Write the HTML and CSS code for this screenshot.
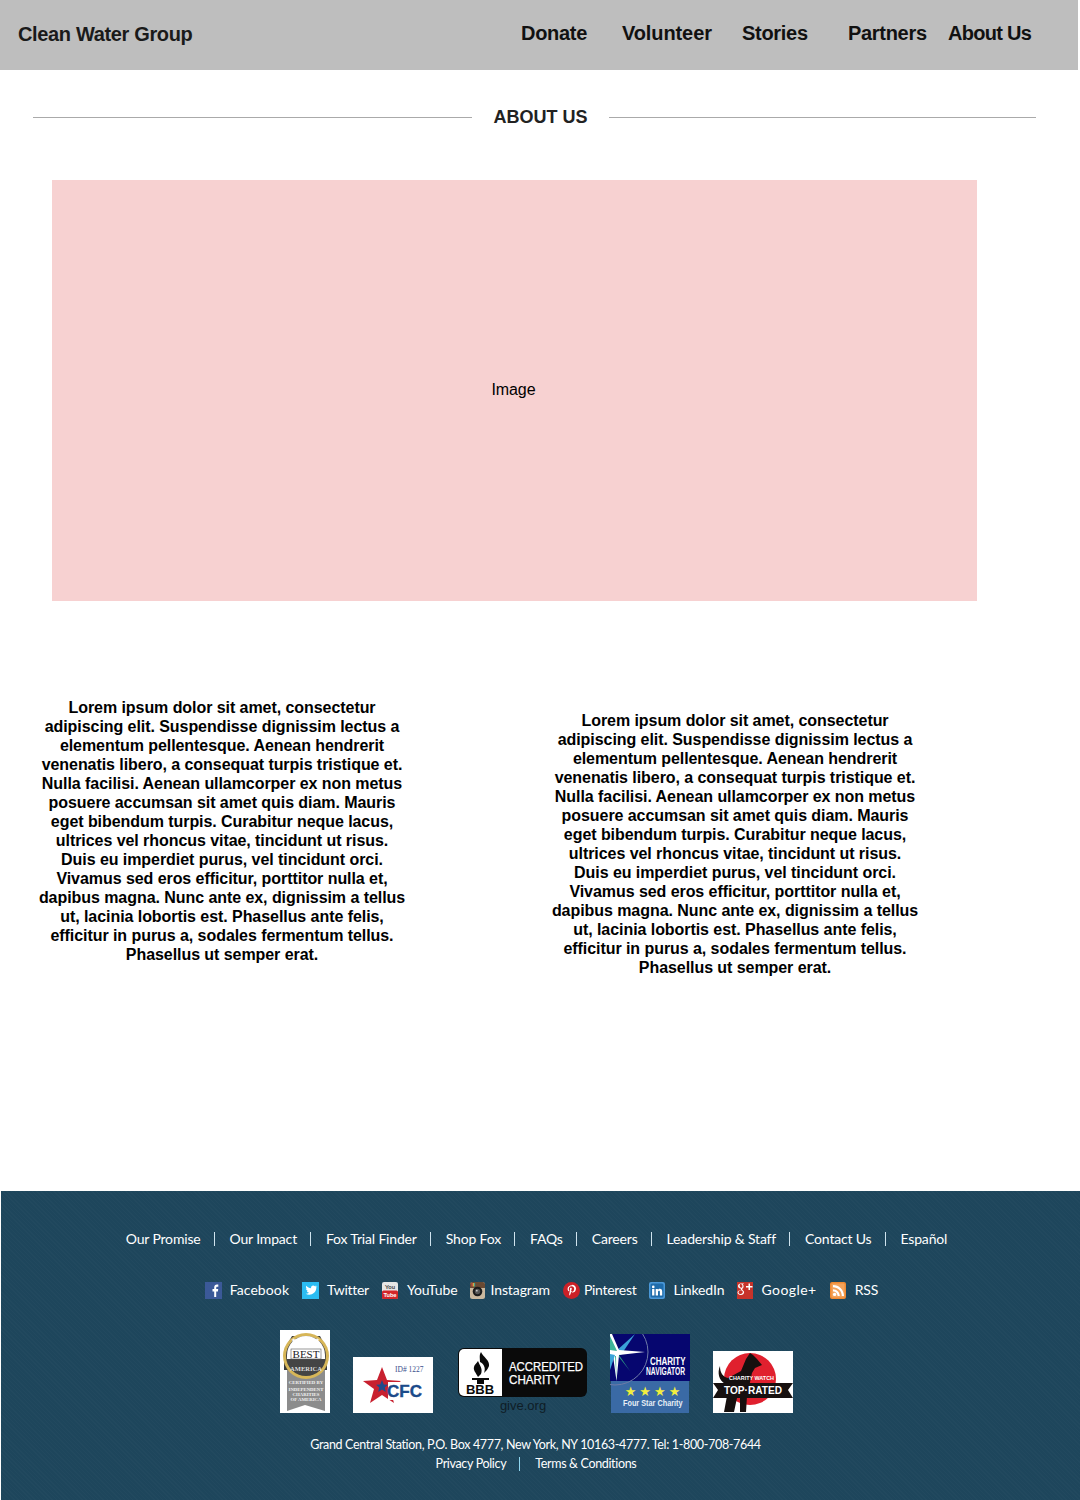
FILE: index.html
```html
<!DOCTYPE html>
<html lang="en">
<head>
    <meta charset="UTF-8">
    <title>Clean Water Group</title>
    <link rel="stylesheet" href="styles.css">
</head>
<body>
    <header class="top-bar">
        <div class="brand">Clean Water Group</div>
        <nav class="top-nav">
            <a>Donate</a>
            <a class="loose-link">Volunteer</a>
            <a>Stories</a>
            <a>Partners</a>
            <a class="last-link">About Us</a>
        </nav>
    </header>

    <div class="section-title">
        <span class="rule rule-left"></span>
        <h2>ABOUT US</h2>
        <span class="rule rule-right"></span>
    </div>

    <div class="image-box">Image</div>

    <div class="columns">
        <p class="col-one">Lorem ipsum dolor sit amet, consectetur adipiscing elit. Suspendisse dignissim lectus a elementum pellentesque. Aenean hendrerit venenatis libero, a consequat turpis tristique et. Nulla facilisi. Aenean ullamcorper ex non metus posuere accumsan sit amet quis diam. Mauris eget bibendum turpis. Curabitur neque lacus, ultrices vel rhoncus vitae, tincidunt ut risus. Duis eu imperdiet purus, vel tincidunt orci. Vivamus sed eros efficitur, porttitor nulla et, dapibus magna. Nunc ante ex, dignissim a tellus ut, lacinia lobortis est. Phasellus ante felis, efficitur in purus a, sodales fermentum tellus. Phasellus ut semper erat.</p>
        <p class="col-two">Lorem ipsum dolor sit amet, consectetur adipiscing elit. Suspendisse dignissim lectus a elementum pellentesque. Aenean hendrerit venenatis libero, a consequat turpis tristique et. Nulla facilisi. Aenean ullamcorper ex non metus posuere accumsan sit amet quis diam. Mauris eget bibendum turpis. Curabitur neque lacus, ultrices vel rhoncus vitae, tincidunt ut risus. Duis eu imperdiet purus, vel tincidunt orci. Vivamus sed eros efficitur, porttitor nulla et, dapibus magna. Nunc ante ex, dignissim a tellus ut, lacinia lobortis est. Phasellus ante felis, efficitur in purus a, sodales fermentum tellus. Phasellus ut semper erat.</p>
    </div>

    <footer class="site-footer">
        <ul class="foot-links">
            <li>Our Promise</li>
            <li>Our Impact</li>
            <li>Fox Trial Finder</li>
            <li>Shop Fox</li>
            <li>FAQs</li>
            <li>Careers</li>
            <li>Leadership &amp; Staff</li>
            <li>Contact Us</li>
            <li>Español</li>
        </ul>

        <ul class="social">
            <li class="text-loose">
                <svg class="icon" viewBox="0 0 17 17"><rect width="17" height="17" fill="#3b5998"/><path d="M9.2 15V9.4H7.5V7.1h1.7V5.5c0-1.9 1.1-2.9 2.8-2.9h1.3v2.2h-1c-.8 0-1.1.4-1.1 1.1v1.2h2l-.3 2.3h-1.7V15z" fill="#fff"/></svg>
                Facebook
            </li>
            <li class="text-tight">
                <svg class="icon" viewBox="0 0 17 17"><rect width="17" height="17" fill="#2bbcf2"/><path d="M14.6 4.5c-.4.2-.9.3-1.3.4.5-.3.8-.7 1-1.3-.4.3-.9.4-1.4.6-.9-1-2.6-1-3.4.1-.5.6-.6 1.3-.4 2-1.9-.1-3.6-1-4.8-2.5-.6 1.1-.3 2.4.7 3.1-.4 0-.7-.1-1-.3 0 1.2.8 2.2 1.9 2.4-.3.1-.7.1-1 0 .3 1 1.2 1.7 2.2 1.7-1 .8-2.2 1.1-3.5 1 3.7 2.3 10.8.8 10.8-6.6.4-.1.9-.4 1.2-.6z" fill="#fff"/></svg>
                Twitter
            </li>
            <li class="gap-nine">
                <svg class="icon icon-small" viewBox="0 0 16 17"><rect width="16" height="17" rx="2" fill="#e6e6e6"/><rect y="8.5" width="16" height="8.5" rx="1.5" fill="#d3262a"/><text x="8" y="7" class="yt-you">You</text><text x="8" y="14.6" class="yt-tube">Tube</text></svg>
                YouTube
            </li>
            <li class="gap-five">
                <svg class="icon icon-narrow" viewBox="0 0 15 17"><rect width="15" height="17" rx="2.5" fill="#cbb99f"/><path d="M0 6V2.5A2.5 2.5 0 0 1 2.5 0h10A2.5 2.5 0 0 1 15 2.5V6z" fill="#6a4a33"/><rect x="1.5" y="1" width="1" height="3.5" fill="#d44"/><rect x="2.8" y="1" width="1" height="3.5" fill="#e8c84a"/><rect x="4.1" y="1" width="1" height="3.5" fill="#4a9"/><circle cx="7.5" cy="9.5" r="4.8" fill="#1c1c1c"/><circle cx="7.5" cy="9.5" r="2.7" fill="#555"/><circle cx="6.8" cy="8.7" r=".9" fill="#ccc"/></svg>
                Instagram
            </li>
            <li class="gap-four text-tight">
                <svg class="icon" viewBox="0 0 17 17"><circle cx="8.5" cy="8.5" r="8.5" fill="#cb2027"/><path d="M8.9 3.2c-2.8 0-4.3 1.8-4.3 3.7 0 .9.5 2 1.3 2.4.2.1.3 0 .3-.1l.2-.7c0-.1 0-.2-.1-.3-.3-.3-.5-.8-.5-1.3 0-1.3 1-2.6 2.8-2.6 1.5 0 2.6 1 2.6 2.5 0 1.7-.8 2.9-2 2.9-.6 0-1.1-.5-1-1.1.2-.8.6-1.6.6-2.1 0-1.3-1.9-1.1-1.9.6 0 .5.2.9.2.9l-.8 3.2c-.2.8 0 2.2 0 2.3 0 .1.1.1.2 0 .1-.1 1-1.3 1.2-2.1l.4-1.6c.2.4.9.8 1.5.8 2 0 3.4-1.8 3.4-4.1 0-2.2-1.8-3.8-4.1-3.8z" fill="#fff"/></svg>
                Pinterest
            </li>
            <li>
                <svg class="icon icon-small" viewBox="0 0 16 17"><rect width="16" height="17" rx="2" fill="#4a98d8"/><rect x="1.5" y="1.5" width="13" height="14" rx="1.5" fill="#1f6cab"/><rect x="3.1" y="7" width="2.3" height="6.5" fill="#fff"/><circle cx="4.25" cy="4.9" r="1.3" fill="#fff"/><path d="M6.7 7h2.2v.9c.4-.6 1.1-1.1 2-1.1 1.700 0 2.300 1.100 2.300 2.800v3.900h-2.300v-3.500c0-.8-.2-1.300-.9-1.300-.8 0-1 .6-1 1.300v3.500H6.700z" fill="#fff"/></svg>
                LinkedIn
            </li>
            <li class="text-wide">
                <svg class="icon icon-small" viewBox="0 0 16 17"><rect width="16" height="17" fill="#c7332a"/><path d="M7 1.4H3.900C2.200 1.400 1 2.600 1 4c0 1.500 1.100 2.500 2.600 2.500h.3c-.1.200-.1.400-.1.600 0 .3.100.6.300.8C2.200 8 .5 8.900.5 10.600c0 1.500 1.600 2.500 3.300 2.500 2 0 3.300-1.300 3.300-2.800 0-1.800-2-2.200-2-3 0-.7 1.500-1 1.500-3 0-1.100-.6-1.700-1-2l1-.2z M3.800 2c1 0 1.600 1 1.600 2.200 0 .9-.5 1.600-1.200 1.600-1 0-1.600-1.100-1.600-2.200C2.600 2.700 3 2 3.800 2z M4 8.200c1.100.4 1.800 1 1.800 1.900 0 1-.8 1.900-2.100 1.900-1.400 0-2.200-.8-2.200-1.800 0-1.200 1.500-2 2.500-2z" fill="#fff"/><path d="M11.500 1.500v2.500H9v1.500h2.500V8H13V5.500h2.500V4H13V1.500z" fill="#fff"/></svg>
                Google+
            </li>
            <li class="gap-nine">
                <svg class="icon icon-small" viewBox="0 0 16 17"><rect width="16" height="17" rx="2" fill="#f08a32"/><rect x="1.5" y="1.5" width="13" height="14" rx="1" fill="#f3a35c"/><circle cx="4.6" cy="12.4" r="1.7" fill="#fff"/><path d="M3 7.2v2.200c2.500 0 4.600 2.100 4.600 4.600h2.200C9.800 10.200 6.800 7.200 3 7.200z M3 3v2.200c4.900 0 8.800 3.900 8.800 8.800H14C14 7.900 9.100 3 3 3z" fill="#fff"/></svg>
                RSS
            </li>
        </ul>

        <div class="badges">
            <svg class="badge" width="50" height="83" viewBox="0 0 50 83">
                <rect width="50" height="83" fill="#fff"/>
                <path d="M7 34 V81 L25 75 L45 81 V34 Z" fill="#8c8c8c"/>
                <path d="M4 20 L12 6 H40 L47 20 V40 H4 Z" fill="#3a3a3a"/>
                <circle cx="26" cy="26" r="23" fill="#d7b658"/>
                <circle cx="26" cy="26" r="20" fill="#444"/>
                <path d="M7 25 A19 19 0 0 1 45 25 V29 H7 Z" fill="#fff"/>
                <rect x="11" y="19" width="30" height="10" fill="#fff" stroke="#555" stroke-width=".6"/>
                <text x="26" y="12" class="best-stars">★★★★★</text>
                <text x="26" y="28" class="best-big">BEST</text>
                <text x="26" y="41" class="best-arc">AMERICA</text>
                <text x="26" y="54" class="best-small">CERTIFIED BY</text>
                <text x="26" y="61" class="best-small">INDEPENDENT</text>
                <text x="26" y="66" class="best-small">CHARITIES</text>
                <text x="26" y="71" class="best-small">OF AMERICA</text>
            </svg>
            <svg class="badge badge-wide-gap" width="80" height="56" viewBox="0 0 80 56">
                <rect width="80" height="56" fill="#fff"/>
                <text x="42" y="15" class="cfc-id">ID# 1227</text>
                <path d="M29 10 L34 23 L48 24 L37 32 L41 46 L29 38 L17 46 L21 32 L10 24 L24 23 Z" fill="#c8202f"/>
                <rect x="35" y="25" width="36" height="18" fill="#fff"/>
                <path d="M29 23 L30.8 27.5 L35 27.8 L31.8 30.5 L32.8 35 L29 32.5 L25.2 35 L26.2 30.5 L23 27.8 L27.2 27.5 Z" fill="#1f4a8c"/>
                <text x="34" y="40" class="cfc-name">CFC</text>
            </svg>
            <svg class="badge badge-narrow-gap" width="130" height="65" viewBox="0 0 130 65">
                <rect width="129" height="49" rx="6" fill="#0a0a0a"/>
                <path d="M1 6 a5 5 0 0 1 5-5 H44 V48 H6 a5 5 0 0 1-5-5 Z" fill="#fff"/>
                <path d="M23 4 C25 9 32 12 31 18 C30 21 28 23 26 25 C28 20 26 16 22 14 C22 10 21 7 23 4 Z" fill="#0a0a0a"/>
                <path d="M20 13 C22 18 25 21 23 26 L20 29 C18 25 15 22 16 19 C16 17 19 15 20 13 Z" fill="#0a0a0a"/>
                <path d="M14 30 H31 V32 H26 V36 H19 V32 H14 Z" fill="#0a0a0a"/>
                <text x="22" y="46" class="bbb-mark">BBB</text>
                <text x="51" y="23" class="bbb-line" textLength="74" lengthAdjust="spacingAndGlyphs">ACCREDITED</text>
                <text x="51" y="36" class="bbb-line" textLength="51" lengthAdjust="spacingAndGlyphs">CHARITY</text>
                <text x="65" y="62" class="bbb-give">give.org</text>
            </svg>
            <svg class="badge" width="80" height="79" viewBox="0 0 80 79">
                <rect width="80" height="47" fill="#06066f"/>
                <rect x="1" y="47" width="78" height="32" fill="#3a6aa5"/>
                <circle cx="5" cy="18" r="33" fill="none" stroke="#6f7ba8" stroke-width="1"/>
                <path d="M5 18 L25 0 L11 21 Z" fill="#3aa3d8"/>
                <path d="M5 18 L20 37 L9 21 Z" fill="#2e9d83"/>
                <path d="M2 0 L9 16 L35 18 L9 21 L6.5 47 L3 22 L0 22 V0 Z" fill="#fff"/>
                <path d="M0 2 L7 17 L0 16 Z" fill="#3fb39a"/>
                <path d="M0 36 L5 21 L0 20 Z" fill="#3aa3d8"/>
                <path d="M6 22 L6.5 47 L5 22 Z" fill="#3fb39a"/>
                <text class="nav-name" transform="translate(40 31) scale(.8 1)">CHARITY</text>
                <text class="nav-name" transform="translate(36 41) scale(.67 1)">NAVIGATOR</text>
                <text x="44" y="62" class="nav-stars">★★★★</text>
                <text class="nav-four" transform="translate(13 72) scale(.86 1)">Four Star Charity</text>
            </svg>
            <svg class="badge" width="80" height="62" viewBox="0 0 80 62">
                <rect width="80" height="62" fill="#fff"/>
                <circle cx="37" cy="28" r="26" fill="#e0202e"/>
                <path d="M7 15 C4 22 6 29 12 33 L14 45 L11 61 H21 L24 47 H27 V61 H33 L34 45 L39 22 L42 17 L49 14 L44 8 L40 4 L37 2 L33 8 L28 20 L15 27 C10 26 7 22 7 15 Z" fill="#16100f"/>
                <path d="M0 32 H80 L75 39 L80 47 H0 L5 39 Z" fill="#16100f"/>
                <text x="16" y="29" class="cw-small" textLength="45" lengthAdjust="spacingAndGlyphs">CHARITY WATCH</text>
                <text x="11" y="43" class="cw-big" textLength="58" lengthAdjust="spacingAndGlyphs">TOP·RATED</text>
            </svg>
        </div>

        <p class="address">Grand Central Station, P.O. Box 4777, New York, NY 10163-4777. Tel: 1-800-708-7644</p>
        <ul class="legal">
            <li>Privacy Policy</li>
            <li>Terms &amp; Conditions</li>
        </ul>
    </footer>
</body>
</html>
```

FILE: styles.css
```css
* {
    margin: 0;
    padding: 0;
    box-sizing: border-box;
}
body {
    width: 1080px;
    height: 1500px;
    overflow: hidden;
    background: #fff;
    font-family: "Liberation Sans", Arial, sans-serif;
    color: #000;
}
ul {
    list-style: none;
}

.top-bar {
    display: flex;
    justify-content: space-between;
    align-items: center;
    width: 1078px;
    height: 70px;
    background: #bebebe;
}
.brand {
    margin-left: 18px;
    margin-top: -2px;
    font-size: 20px;
    font-weight: bold;
    letter-spacing: -0.35px;
    color: #1a1a1a;
}
.top-nav {
    display: grid;
    grid-template-columns: 101px 120px 106px 100px 130px;
    margin-top: -3px;
    font-size: 20px;
    font-weight: bold;
    letter-spacing: -0.3px;
    color: #111;
}
.loose-link {
    letter-spacing: -0.1px;
}
.last-link {
    letter-spacing: -0.7px;
}

.section-title {
    display: flex;
    align-items: center;
    margin-top: 36px;
    height: 23px;
}
.section-title h2 {
    width: 137px;
    text-align: center;
    font-size: 18px;
    font-weight: bold;
    color: #222;
}
.rule {
    height: 1px;
    background: #aaa;
}
.rule-left {
    width: 439px;
    margin-left: 33px;
}
.rule-right {
    width: 427px;
}

.image-box {
    display: flex;
    align-items: center;
    justify-content: center;
    width: 925px;
    height: 421px;
    margin: 51px 0 0 52px;
    padding: 0 2px 2px 0;
    background: #f7d1d1;
    font-size: 16px;
    letter-spacing: -0.1px;
}

.columns {
    display: grid;
    grid-template-columns: 370px 370px;
    column-gap: 143px;
    height: 590px;
    padding: 97px 0 0 37px;
}
.columns p {
    text-align: center;
    font-size: 16px;
    line-height: 19px;
    font-weight: bold;
    letter-spacing: -0.06px;
}
.col-two {
    margin-top: 13px;
}

.site-footer {
    height: 309px;
    margin-left: 1px;
    padding-top: 39px;
    background-color: #1e465c;
    background-image: repeating-linear-gradient(45deg, rgba(255,255,255,.015) 0 1px, transparent 1px 3px);
    font-family: Lato, "Liberation Sans", sans-serif;
    font-size: 14px;
    letter-spacing: -0.17px;
    color: #fff;
}
.foot-links,
.social,
.legal {
    display: flex;
    justify-content: center;
    line-height: 18px;
}
.foot-links li + li,
.legal li + li {
    margin-left: 13px;
    padding-left: 16px;
    background: linear-gradient(#cfe3ee, #cfe3ee) no-repeat 0 center / 1px 14px;
}
.foot-links {
    padding-right: 8px;
}

.social {
    margin-top: 33px;
    padding-left: 2px;
    letter-spacing: -0.1px;
}
.social li {
    display: flex;
    align-items: center;
    gap: 8px;
    margin-right: 13px;
}
.social li:last-child {
    margin-right: 0;
}
.social .gap-five {
    gap: 5px;
}
.social .gap-four {
    gap: 4px;
}
.social .gap-nine {
    gap: 9px;
}
.social .text-tight {
    letter-spacing: -0.3px;
}
.social .text-loose {
    letter-spacing: 0.1px;
}
.social .text-wide {
    letter-spacing: 0.45px;
}
.icon {
    display: block;
    width: 17px;
    height: 17px;
}
.icon-small {
    width: 16px;
}
.icon-narrow {
    width: 15px;
}

.badges {
    display: flex;
    align-items: flex-end;
    margin: 31px 0 0 279px;
}
.badge {
    display: block;
    margin-right: 23px;
    flex: none;
}
.badge-wide-gap {
    margin-right: 25px;
}
.badge-narrow-gap {
    margin-right: 22px;
}
.badge text {
    font-family: "Liberation Sans", sans-serif;
    letter-spacing: 0;
}

.address {
    margin-top: 22px;
    padding-right: 10px;
    text-align: center;
    font-size: 12.5px;
    line-height: 19px;
    letter-spacing: -0.34px;
}
.legal {
    padding-right: 9px;
    font-size: 12.5px;
    line-height: 19px;
    letter-spacing: -0.34px;
}
.legal li + li {
    background-image: linear-gradient(#8fd6f0, #8fd6f0);
}

/* text inside the drawn badges */
.yt-you, .yt-tube {
    text-anchor: middle;
    font-size: 6px;
    font-weight: bold;
    letter-spacing: 0;
}
.yt-you { fill: #444; }
.yt-tube { fill: #fff; }
.badge .best-stars {
    text-anchor: middle;
    font-family: "DejaVu Sans", sans-serif;
    font-size: 5.5px;
    letter-spacing: 1px;
    fill: #fff;
}
.badge .best-big {
    text-anchor: middle;
    font-size: 11px;
    font-family: "Liberation Serif", serif;
    fill: #222;
}
.badge .best-arc {
    text-anchor: middle;
    font-size: 6.5px;
    font-weight: bold;
    font-family: "Liberation Serif", serif;
    fill: #ddd;
}
.badge .best-small {
    text-anchor: middle;
    font-size: 4.8px;
    font-weight: bold;
    font-family: "Liberation Serif", serif;
    fill: #f2f2f2;
}
.badge .cfc-id {
    font-size: 7.5px;
    font-family: "Liberation Serif", serif;
    fill: #3b4f8c;
}
.cfc-name {
    font-size: 17px;
    font-weight: bold;
    fill: #1b4a8a;
    stroke: #1b4a8a;
    stroke-width: .4;
}
.bbb-mark {
    text-anchor: middle;
    font-size: 13px;
    font-weight: bold;
    fill: #0a0a0a;
}
.bbb-line {
    font-size: 12px;
    fill: #fff;
    stroke: #fff;
    stroke-width: .25;
}
.bbb-give {
    text-anchor: middle;
    font-size: 13px;
    fill: #0f1d26;
}
.nav-name {
    font-size: 10px;
    font-weight: bold;
    fill: #fff;
}
.badge .nav-stars {
    text-anchor: middle;
    font-size: 13px;
    letter-spacing: 3px;
    fill: #f2ee3e;
    font-family: "DejaVu Sans", sans-serif;
}
.nav-four {
    font-size: 8.5px;
    font-weight: bold;
    fill: #e8eef5;
}
.cw-small {
    font-size: 6px;
    font-weight: bold;
    fill: #fff;
}
.cw-big {
    font-size: 11px;
    font-weight: bold;
    fill: #fff;
}
```
